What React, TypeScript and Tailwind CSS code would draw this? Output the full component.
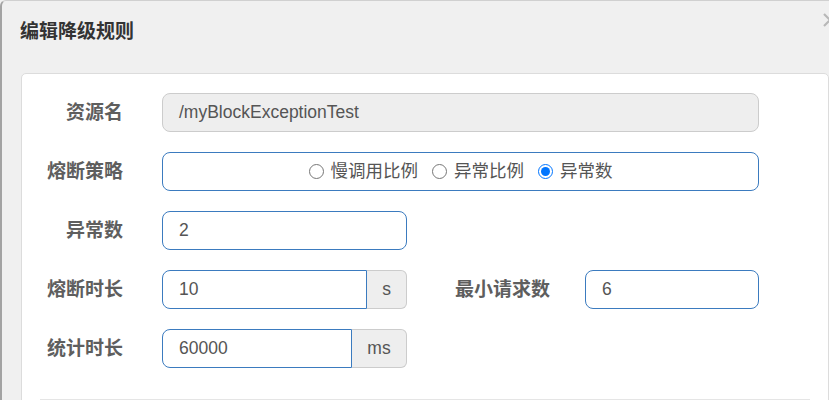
import React from "react";

const cjk = "font-['Liberation_Sans','Noto_Sans_CJK_SC',sans-serif]";

function Label({ text, width = "w-[101px]" }: { text: string; width?: string }) {
  return (
    <div className={`${width} shrink-0 text-right text-[19px] font-bold text-[#5e5e5e] leading-[24px]`}>
      {text}
    </div>
  );
}

function TextBox({ value, width }: { value: string; width: string }) {
  return (
    <div
      className={`${width} h-[39px] flex items-center pl-[16px] border border-[#3b7bbf] rounded-[8px] bg-white text-[17.5px] text-[#555]`}
    >
      {value}
    </div>
  );
}

function AddonBox({ value, unit, inputWidth, unitWidth }: { value: string; unit: string; inputWidth: string; unitWidth: string }) {
  return (
    <div className="flex h-[39px]">
      <div
        className={`${inputWidth} flex items-center pl-[16px] border border-[#3b7bbf] rounded-l-[8px] bg-white text-[17.5px] text-[#555]`}
      >
        {value}
      </div>
      <div
        className={`${unitWidth} flex items-center justify-center border border-l-0 border-[#ccc] rounded-r-[6px] bg-[#eee] text-[17.5px] text-[#555]`}
      >
        {unit}
      </div>
    </div>
  );
}

export default function App() {
  const strategies = ["慢调用比例", "异常比例", "异常数"];
  const selected = "异常数";

  return (
    <div className={`w-[829px] h-[400px] overflow-hidden bg-[#f0f0f0] ${cjk}`}>
      <div className="relative h-[420px] border-l-2 border-t border-l-[#a3a3a3] border-t-[#d0d0d0] rounded-tl-[6px]">
        {/* header */}
        <div className="h-[72px] pt-[19px] pl-[18px]">
          <h4 className="text-[19px] leading-[24px] font-bold text-[#333]">编辑降级规则</h4>
        </div>
        <svg className="absolute left-[820px] top-[11px]" width="16" height="16" viewBox="0 0 16 16">
          <path d="M2 2 L14 14 M14 2 L2 14" stroke="#b8b8b8" strokeWidth="2.2" fill="none" />
        </svg>

        {/* body */}
        <div className="ml-[19px] h-[360px] bg-white border border-[#dcdcdc] rounded-t-[5px] pt-[19px]">
          <div className="flex flex-col gap-[20px]">
            <div className="flex items-center gap-[39px]">
              <Label text="资源名" />
              <div className="w-[597px] h-[39px] flex items-center pl-[16px] border border-[#ccc] rounded-[8px] bg-[#eee] text-[17.5px] text-[#555]">
                /myBlockExceptionTest
              </div>
            </div>

            <div className="flex items-center gap-[39px]">
              <Label text="熔断策略" />
              <div className="w-[597px] h-[39px] flex items-center justify-center gap-[14px] border border-[#3b7bbf] rounded-[8px] bg-white text-[17.5px] text-[#555]">
                {strategies.map((s) => (
                  <label key={s} className="flex items-center gap-[7px]">
                    <input
                      type="radio"
                      name="grade"
                      defaultChecked={s === selected}
                      className="w-[15px] h-[15px] m-0 accent-[#0075ff]"
                    />
                    <span>{s}</span>
                  </label>
                ))}
              </div>
            </div>

            <div className="flex items-center gap-[39px]">
              <Label text="异常数" />
              <TextBox value="2" width="w-[245px]" />
            </div>

            <div className="flex items-center gap-[39px]">
              <Label text="熔断时长" />
              <AddonBox value="10" unit="s" inputWidth="w-[205px]" unitWidth="w-[40px]" />
              <div className="flex items-center gap-[35px] -ml-[39px]">
                <Label text="最小请求数" width="w-[143px]" />
                <TextBox value="6" width="w-[174px]" />
              </div>
            </div>

            <div className="flex items-center gap-[39px]">
              <Label text="统计时长" />
              <AddonBox value="60000" unit="ms" inputWidth="w-[190px]" unitWidth="w-[55px]" />
            </div>
          </div>

          <div className="mt-[31px] mx-[18px] border-t border-[#e5e5e5]" />
        </div>
      </div>
    </div>
  );
}
